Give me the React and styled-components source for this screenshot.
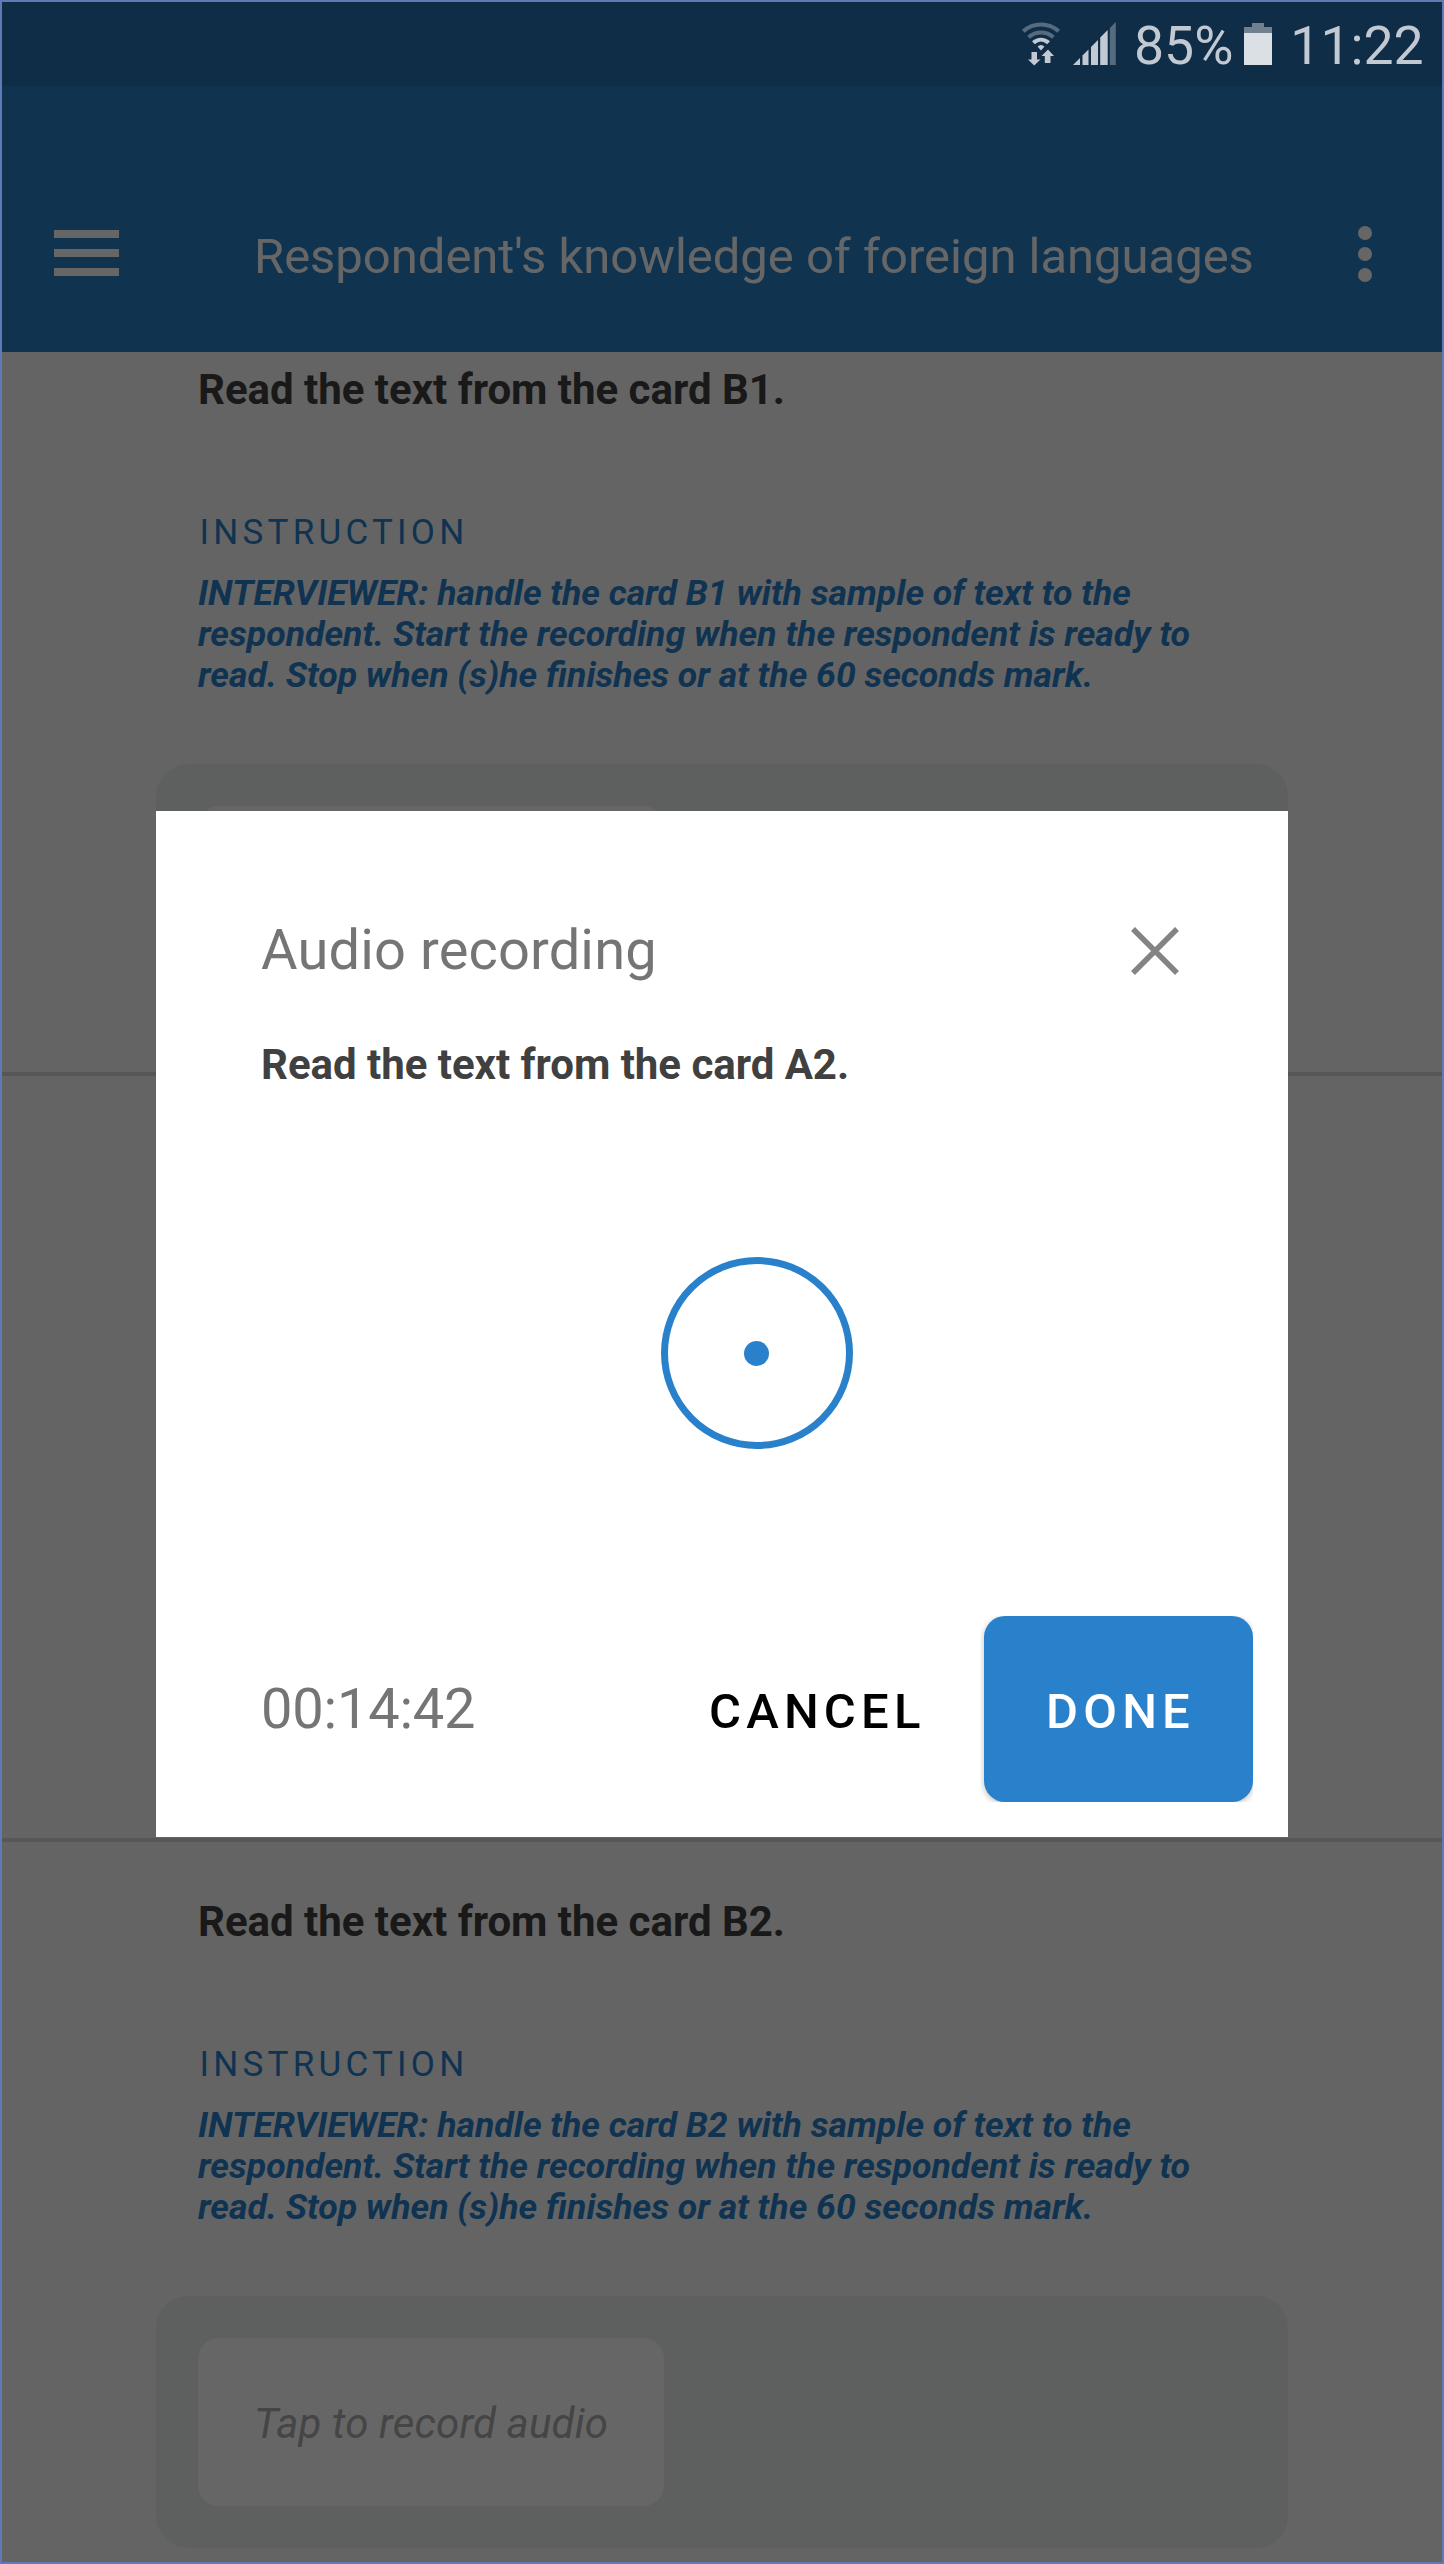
import React from "react";
import styled, { createGlobalStyle } from "styled-components";

const GlobalStyle = createGlobalStyle`
  *, *::before, *::after { box-sizing: border-box; }
  body { margin: 0; background: #fafafa; }
  button { font: inherit; border: 0; padding: 0; background: none; }
`;

const Screen = styled.div`
  position: relative;
  display: flex;
  flex-direction: column;
  width: 1444px;
  height: 2564px;
  overflow: hidden;
  border: 2px solid #6179b4;
  background: #fafafa;
  font-family: Roboto, sans-serif;
`;

const StatusBar = styled.div`
  position: relative;
  z-index: 2;
  flex: none;
  display: flex;
  align-items: flex-start;
  height: 84px;
  padding-left: 1019px;
  background: #0f2d46;
  color: #c3c9d2;
`;

const StatusText = styled.span`
  font-size: 53.5px;
  line-height: 64px;
  margin: 12px 0 0 ${(p) => p.$gap}px;
  white-space: nowrap;
`;

const StatusIcon = styled.svg`
  flex: none;
  margin-top: 19px;
  margin-left: ${(p) => p.$gap || 0}px;
`;

const AppBar = styled.header`
  flex: none;
  display: flex;
  align-items: flex-start;
  height: 266px;
  background: #2a82c9;
  color: #fff;
`;

const Bars = styled.div`
  display: flex;
  flex-direction: column;
  gap: 11px;
  width: 65px;
  margin: 144px 0 0 51.5px;
`;

const Bar = styled.span`
  height: 8px;
  background: #fff;
`;

const PageTitle = styled.h1`
  flex: none;
  width: 1107px;
  margin: 141px 0 0 135.5px;
  font-size: 48.95px;
  line-height: 60px;
  font-weight: 400;
  white-space: nowrap;
`;

const Dots = styled.div`
  display: flex;
  flex-direction: column;
  gap: 7px;
  margin: 140px 0 0 -3px;
`;

const Dot = styled.span`
  width: 14px;
  height: 14px;
  border-radius: 50%;
  background: #fff;
`;

const Viewport = styled.main`
  flex: 1;
  min-height: 0;
  overflow: hidden;
`;

const QuestionList = styled.div`
  margin-top: -42px;
`;

const Question = styled.section`
  height: 766px;
  padding: 55px 154px 0;
  border-bottom: 4px solid #dadada;
`;

const QuestionText = styled.h2`
  margin: 0 0 98px 42px;
  font-size: 42px;
  line-height: 49px;
  font-weight: 700;
  letter-spacing: -0.02px;
  color: #404040;
`;

const InstructionLabel = styled.div`
  margin: 0 0 20px 43.5px;
  font-size: 35px;
  line-height: 41px;
  letter-spacing: 4.25px;
  color: #2a81cb;
`;

const Instruction = styled.p`
  margin: 0 0 68px 42px;
  font-size: 35.62px;
  line-height: 41px;
  font-weight: 700;
  font-style: italic;
  white-space: pre-line;
  color: #2a81cb;
`;

const AnswerPanel = styled.div`
  height: 252px;
  padding: 42px;
  border-radius: 32px;
  background: #e9f0ed;
`;

const RecordBox = styled.button`
  display: flex;
  align-items: center;
  width: 466px;
  height: 168px;
  padding: 2px 0 0 56px;
  border-radius: 21px;
  background: #fff;
  font-size: 42px;
  font-style: italic;
  letter-spacing: 0.18px;
  color: #adadad;
`;

const Scrim = styled.div`
  position: absolute;
  inset: 0;
  z-index: 1;
  padding: 809px 154px 0;
  background: rgba(0, 0, 0, 0.6);
`;

const Dialog = styled.div`
  display: flex;
  flex-direction: column;
  height: 1026px;
  padding: 100px 35px 35px 105px;
  background: #fff;
`;

const DialogHeader = styled.div`
  display: flex;
  align-items: flex-start;
  justify-content: space-between;
  padding-right: 74px;
`;

const DialogTitle = styled.div`
  margin-top: 1px;
  font-size: 56px;
  line-height: 76px;
  letter-spacing: 0.15px;
  color: #757575;
`;

const CloseIcon = styled.svg`
  margin-top: 16px;
`;

const DialogQuestion = styled.div`
  margin-top: 52px;
  font-size: 42px;
  line-height: 49px;
  font-weight: 700;
  letter-spacing: -0.03px;
  color: #404040;
`;

const Indicator = styled.div`
  flex: none;
  display: flex;
  align-items: center;
  justify-content: center;
  width: 192px;
  height: 192px;
  margin: 168px 0 0 400px;
  padding-right: 1px;
  border: 7px solid #2a81cb;
  border-radius: 50%;
`;

const IndicatorDot = styled.span`
  width: 25px;
  height: 25px;
  border-radius: 50%;
  background: #2a81cb;
`;

const Actions = styled.div`
  display: flex;
  align-items: center;
  margin-top: auto;
  height: 186px;
`;

const Timer = styled.span`
  width: 448px;
  font-size: 56px;
  line-height: 66px;
  letter-spacing: -0.2px;
  color: #757575;
`;

const CancelButton = styled.button`
  width: 275px;
  padding-top: 5px;
  text-align: left;
  font-size: 49px;
  line-height: 58px;
  font-weight: 500;
  letter-spacing: 5.2px;
  color: #000;
`;

const DoneButton = styled.button`
  width: 269px;
  height: 186px;
  padding: 5px 0 0 4px;
  border-radius: 21px;
  background: #2a81cb;
  color: #fff;
  font-size: 49px;
  line-height: 58px;
  font-weight: 500;
  letter-spacing: 5.2px;
  box-shadow: 0 2px 6px rgba(0, 0, 0, 0.25);
  clip-path: inset(0 0 0 -4px);
`;

function WifiIcon() {
  return (
    <StatusIcon width="40" height="46" viewBox="0 0 40 46" fill="none" stroke="#c3c9d2">
      <path d="M2.3 10.3C12.5 1.3 27.500 1.3 37.700 10.3" strokeWidth="4" opacity=".4" />
      <path d="M7.600 16.200C14.600 9.800 25.400 9.800 32.400 16.200" strokeWidth="4" opacity=".4" />
      <path d="M12.400 21.800C17 17.700 23 17.700 27.600 21.800" strokeWidth="4.200" />
      <path d="M16.500 25.500Q20 22.500 23.500 25.500L20 29.500Z" fill="#c3c9d2" stroke="none" />
      <path d="M10.500 31H16V38.500H19.500L13.200 44.500L7 38.500H10.500Z" fill="#c3c9d2" stroke="none" />
      <path d="M23.800 42V35H20.500L27 28.500L33 35H29.500V42Z" fill="#c3c9d2" stroke="none" />
    </StatusIcon>
  );
}

function SignalIcon() {
  return (
    <StatusIcon $gap={12} width="44" height="46" viewBox="0 0 44 46" fill="#c3c9d2">
      <path d="M0 44L7 37V44Z" />
      <path d="M9.500 34.500L15.500 28.500V44H9.500Z" />
      <path d="M18 26L25 19V44H18Z" />
      <path d="M27.200 16.500L34.700 9V44H27.200Z" />
      <path d="M36.800 7L42.800 1V44H36.800Z" opacity=".4" />
    </StatusIcon>
  );
}

function BatteryIcon() {
  return (
    <StatusIcon $gap={11} width="28" height="46" viewBox="0 0 28 46">
      <path d="M0 6H8V2H20V6H28V12H0Z" fill="#6f8090" />
      <path d="M0 12H28V44H0Z" fill="#dae0e4" />
    </StatusIcon>
  );
}

function QuestionBlock({ card }) {
  return (
    <Question>
      <QuestionText>Read the text from the card {card}.</QuestionText>
      <InstructionLabel>INSTRUCTION</InstructionLabel>
      <Instruction>
        {`INTERVIEWER: handle the card ${card} with sample of text to the\nrespondent. Start the recording when the respondent is ready to\nread. Stop when (s)he finishes or at the 60 seconds mark.`}
      </Instruction>
      <AnswerPanel>
        <RecordBox>{card === "B2" && "Tap to record audio"}</RecordBox>
      </AnswerPanel>
    </Question>
  );
}

export default function App() {
  return (
    <>
      <GlobalStyle />
      <Screen>
        <StatusBar>
          <WifiIcon />
          <SignalIcon />
          <StatusText $gap={17}>85%</StatusText>
          <BatteryIcon />
          <StatusText $gap={18}>11:22</StatusText>
        </StatusBar>
        <AppBar>
          <Bars>
            <Bar />
            <Bar />
            <Bar />
          </Bars>
          <PageTitle>Respondent's knowledge of foreign languages</PageTitle>
          <Dots>
            <Dot />
            <Dot />
            <Dot />
          </Dots>
        </AppBar>
        <Viewport>
          <QuestionList>
            <QuestionBlock card="B1" />
            <Question />
            <QuestionBlock card="B2" />
          </QuestionList>
        </Viewport>
        <Scrim>
          <Dialog>
            <DialogHeader>
              <DialogTitle>Audio recording</DialogTitle>
              <CloseIcon width="48" height="48" viewBox="0 0 48 48" stroke="#848484" strokeWidth="5.500">
                <path d="M2 2L46 46M46 2L2 46" />
              </CloseIcon>
            </DialogHeader>
            <DialogQuestion>Read the text from the card A2.</DialogQuestion>
            <Indicator>
              <IndicatorDot />
            </Indicator>
            <Actions>
              <Timer>00:14:42</Timer>
              <CancelButton>CANCEL</CancelButton>
              <DoneButton>DONE</DoneButton>
            </Actions>
          </Dialog>
        </Scrim>
      </Screen>
    </>
  );
}
